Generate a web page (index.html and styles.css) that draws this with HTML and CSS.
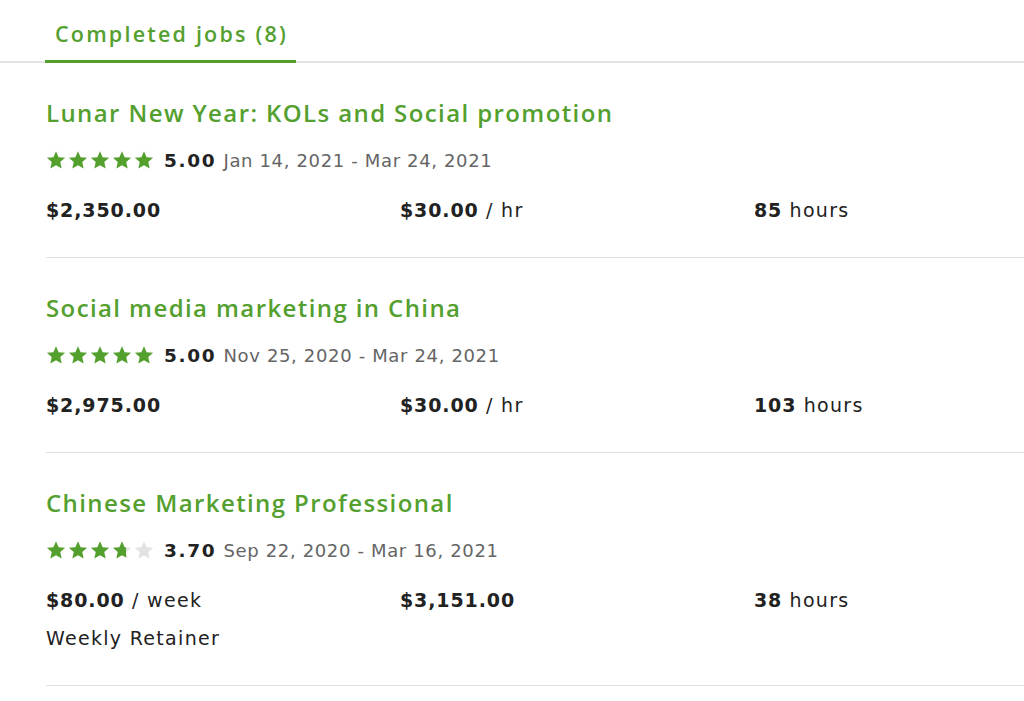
FILE: index.html
```html
<!DOCTYPE html>
<html lang="en">
<head>
<meta charset="utf-8">
<title>Completed jobs</title>
<link rel="stylesheet" href="styles.css">
</head>
<body>
<svg width="0" height="0" class="defs" aria-hidden="true">
  <defs>
    <symbol id="star" viewBox="0 0 20 20">
      <path d="M10 1.2l2.65 5.95 6.5.62-4.9 4.33 1.43 6.36L10 15.15 4.32 18.46l1.43-6.36L.85 7.77l6.5-.62z"/>
    </symbol>
    <linearGradient id="part70">
      <stop offset="0.7" stop-color="#54a02f"/>
      <stop offset="0.7" stop-color="#e2e2e2"/>
    </linearGradient>
  </defs>
</svg>
<div class="page">
  <div class="tabs">
    <div class="tab">Completed jobs (8)</div>
  </div>

  <div class="job">
    <h3 class="title">Lunar New Year: KOLs and Social promotion</h3>
    <div class="meta">
      <span class="stars">
        <svg class="star"><use href="#star"/></svg><svg class="star"><use href="#star"/></svg><svg class="star"><use href="#star"/></svg><svg class="star"><use href="#star"/></svg><svg class="star"><use href="#star"/></svg>
      </span>
      <strong class="score">5.00</strong>
      <span class="dates">Jan 14, 2021 - Mar 24, 2021</span>
    </div>
    <div class="stats">
      <div><strong>$2,350.00</strong></div>
      <div><strong>$30.00</strong> / hr</div>
      <div><strong>85</strong> hours</div>
    </div>
  </div>

  <div class="job">
    <h3 class="title">Social media marketing in China</h3>
    <div class="meta">
      <span class="stars">
        <svg class="star"><use href="#star"/></svg><svg class="star"><use href="#star"/></svg><svg class="star"><use href="#star"/></svg><svg class="star"><use href="#star"/></svg><svg class="star"><use href="#star"/></svg>
      </span>
      <strong class="score">5.00</strong>
      <span class="dates">Nov 25, 2020 - Mar 24, 2021</span>
    </div>
    <div class="stats">
      <div><strong>$2,975.00</strong></div>
      <div><strong>$30.00</strong> / hr</div>
      <div><strong>103</strong> hours</div>
    </div>
  </div>

  <div class="job">
    <h3 class="title">Chinese Marketing Professional</h3>
    <div class="meta">
      <span class="stars">
        <svg class="star"><use href="#star"/></svg><svg class="star"><use href="#star"/></svg><svg class="star"><use href="#star"/></svg><svg class="star partial"><use href="#star"/></svg><svg class="star empty"><use href="#star"/></svg>
      </span>
      <strong class="score">3.70</strong>
      <span class="dates">Sep 22, 2020 - Mar 16, 2021</span>
    </div>
    <div class="stats">
      <div><strong>$80.00</strong> / week<div class="note">Weekly Retainer</div></div>
      <div><strong>$3,151.00</strong></div>
      <div><strong>38</strong> hours</div>
    </div>
  </div>
</div>
</body>
</html>
```

FILE: styles.css
```css
html, body {
  margin: 0;
  padding: 0;
  background: #fff;
}
body {
  font-family: "DejaVu Sans", "Open Sans", sans-serif;
  color: #222;
  overflow: hidden;
}
.defs {
  position: absolute;
  width: 0;
  height: 0;
}
.page {
  width: 1024px;
}
.tabs {
  border-bottom: 2px solid #e4e4e4;
  padding-left: 45px;
  display: flex;
}
.tab {
  height: 63px;
  box-sizing: border-box;
  padding: 20px 8px 0 10px;
  font-family: "Open Sans", sans-serif;
  font-size: 21.5px;
  font-weight: 600;
  letter-spacing: 2.2px;
  color: #54a02f;
  border-bottom: 3px solid #54a02f;
  margin-bottom: -2px;
  line-height: 28px;
  white-space: nowrap;
}
.job {
  margin-left: 46px;
  padding: 35px 0 32px;
  border-bottom: 1px solid #e0e0e0;
}
.title {
  margin: 0 0 17px;
  font-family: "Open Sans", sans-serif;
  font-size: 24px;
  line-height: 30px;
  font-weight: 600;
  letter-spacing: 1.4px;
  color: #54a02f;
}
.meta {
  display: flex;
  align-items: center;
  height: 30px;
  margin-bottom: 20px;
}
.stars {
  display: flex;
  gap: 2px;
  margin-right: 10px;
}
.star {
  width: 20px;
  height: 20px;
  fill: #54a02f;
}
.star.partial {
  fill: url(#part70);
}
.star.empty {
  fill: #e2e2e2;
}
.score {
  font-size: 18.5px;
  font-weight: 700;
  letter-spacing: 1.7px;
  color: #222;
  margin-right: 7px;
}
.dates {
  font-size: 18px;
  color: #656565;
  letter-spacing: 0.65px;
}
.stats {
  display: grid;
  grid-template-columns: 354px 354px 1fr;
  font-size: 19px;
  line-height: 30px;
  letter-spacing: 1.3px;
  color: #222;
}
.stats strong {
  font-weight: 700;
  letter-spacing: 0.9px;
}
.note {
  margin-top: 8px;
}
```
